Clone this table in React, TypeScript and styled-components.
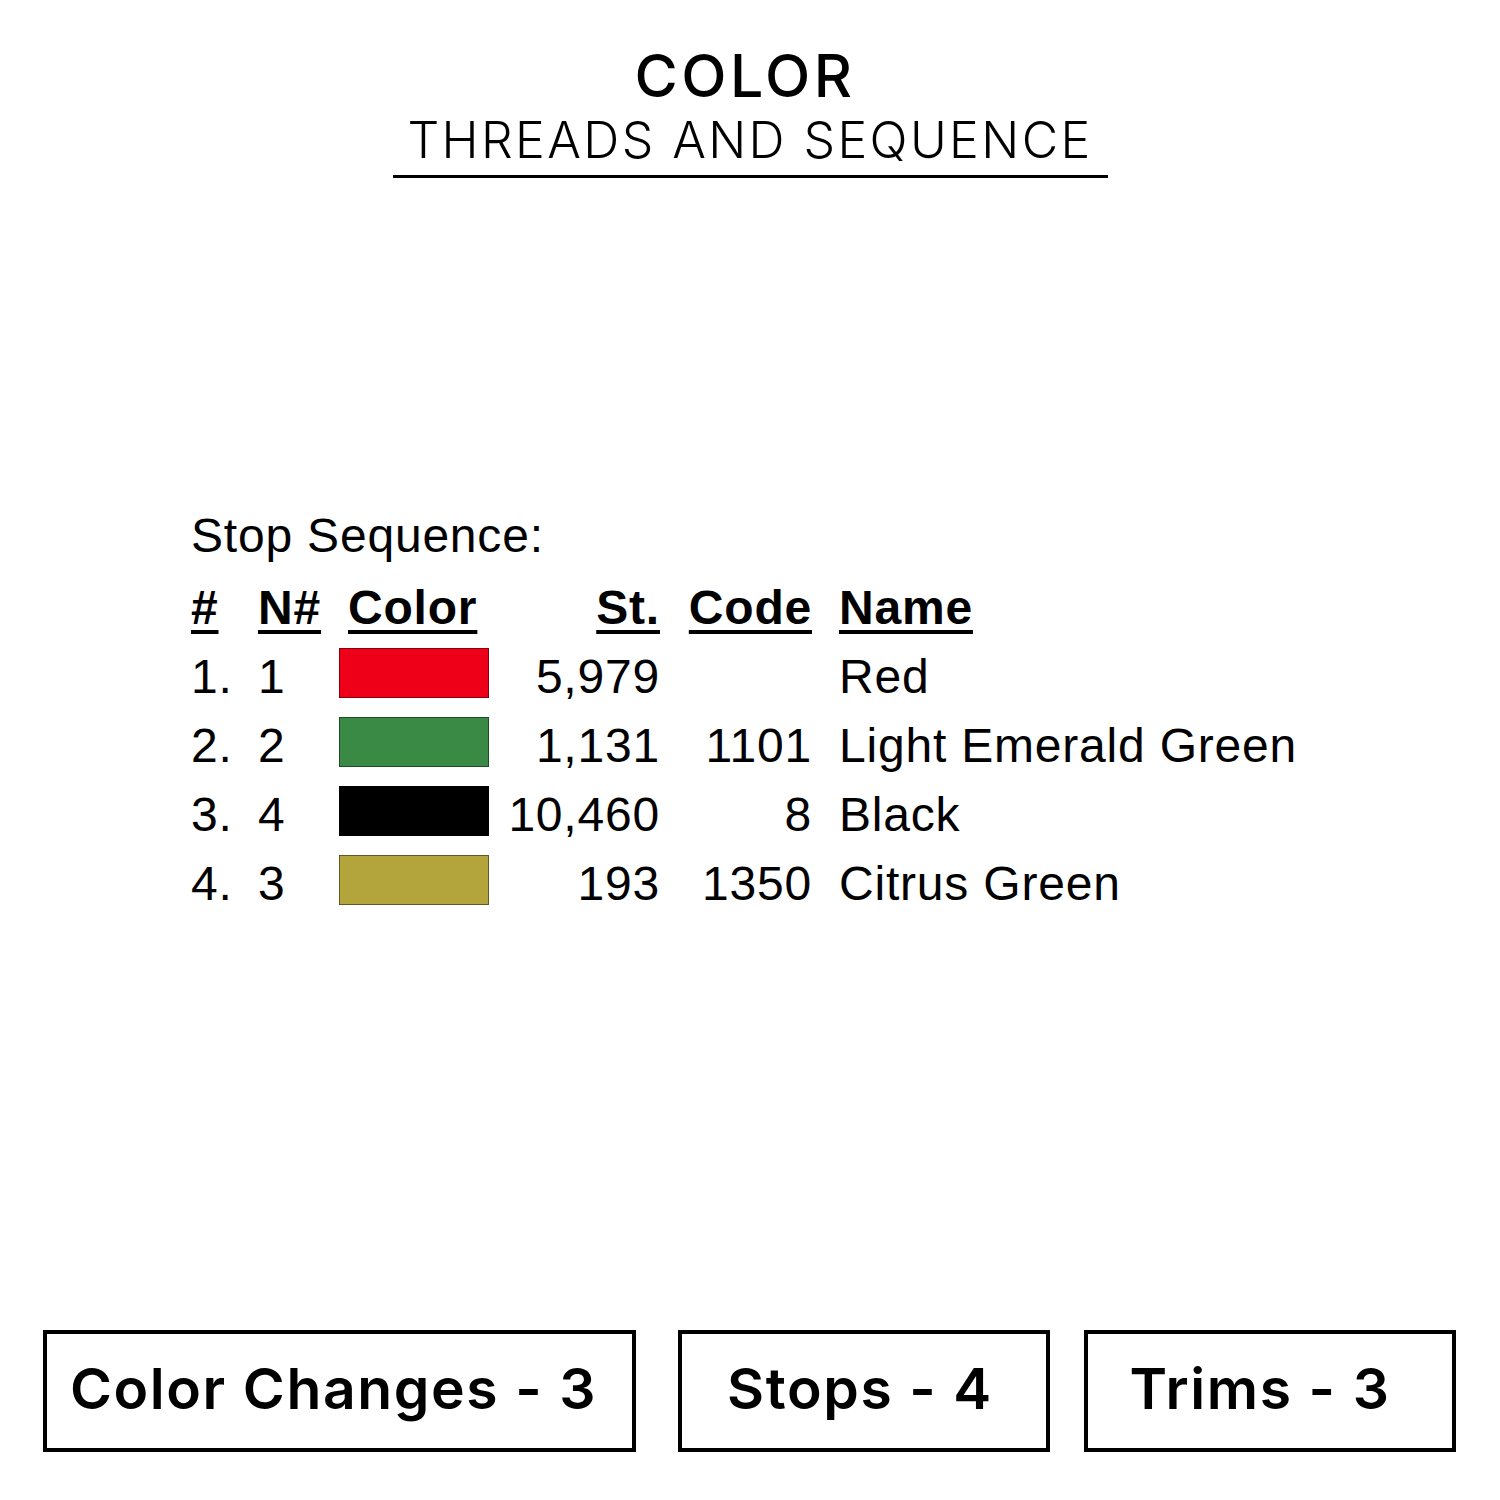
import React from "react";
import styled, { createGlobalStyle } from "styled-components";

const Global = createGlobalStyle`
  html, body { margin: 0; padding: 0; background: #ffffff; }
  body { width: 1500px; height: 1500px; overflow: hidden; }
`;

const Page = styled.div`
  width: 1500px;
  height: 1500px;
  display: flex;
  flex-direction: column;
  background: #fff;
  color: #000;
  box-sizing: border-box;
`;

const Header = styled.header`
  display: flex;
  flex-direction: column;
  align-items: center;
  padding-top: 44px;
`;

const Title = styled.h1`
  margin: 0;
  font-family: Inter, "Noto Sans", sans-serif;
  font-weight: 500;
  font-size: 59px;
  line-height: 64px;
  letter-spacing: 3.5px;
  padding-right: 10px;
`;

const Subtitle = styled.h2`
  margin: 0;
  width: 715px;
  text-align: center;
  font-family: Inter, "Noto Sans", sans-serif;
  font-weight: 300;
  font-size: 50px;
  line-height: 58px;
  letter-spacing: 2.4px;
  padding-top: 3px;
  padding-bottom: 6px;
  border-bottom: 3.5px solid #000;
`;

const Sequence = styled.section`
  margin-top: 323px;
  padding-left: 191px;
  font-family: "Liberation Sans", Arial, sans-serif;
  font-size: 48px;
  letter-spacing: 0.8px;
`;

const Caption = styled.div`
  line-height: 69px;
  margin-bottom: 3px;
`;

const Table = styled.div`
  display: grid;
  grid-template-columns: 67px 81px 150px 171px 152px auto;
  grid-auto-rows: 69px;
  line-height: 69px;
`;

const Head = styled.div<{ $align?: "left" | "right"; $pad?: number }>`
  font-weight: 700;
  text-decoration: underline;
  text-decoration-thickness: 4px;
  text-underline-offset: 6px;
  text-align: ${(p) => p.$align ?? "left"};
  padding-left: ${(p) => p.$pad ?? 0}px;
  white-space: nowrap;
`;

const Cell = styled.div<{ $align?: "left" | "right"; $pad?: number }>`
  text-align: ${(p) => p.$align ?? "left"};
  padding-left: ${(p) => p.$pad ?? 0}px;
  white-space: nowrap;
`;

const Swatch = styled.div<{ $color: string }>`
  margin-top: 6px;
  width: 150px;
  height: 50px;
  box-sizing: border-box;
  background: ${(p) => p.$color};
  border: 1.5px solid rgba(0, 0, 0, 0.45);
`;

const Spacer = styled.div`
  flex: 1;
`;

const Stats = styled.footer`
  display: flex;
  padding: 0 0 48px 43px;
`;

const StatBox = styled.div<{ $w: number; $ml: number; $shift: number }>`
  width: ${(p) => p.$w}px;
  margin-left: ${(p) => p.$ml}px;
  height: 122px;
  box-sizing: border-box;
  border: 4px solid #000;
  display: flex;
  align-items: center;
  justify-content: center;
  font-family: Inter, "Noto Sans", sans-serif;
  font-weight: 600;
  font-size: 57px;
  letter-spacing: 1.6px;
  padding-bottom: 6px;
  padding-right: ${(p) => p.$shift}px;
`;

const rows = [
  { n: "1.", nn: "1", color: "#ee0019", st: "5,979", code: "", name: "Red" },
  { n: "2.", nn: "2", color: "#3a8a45", st: "1,131", code: "1101", name: "Light Emerald Green" },
  { n: "3.", nn: "4", color: "#000000", st: "10,460", code: "8", name: "Black" },
  { n: "4.", nn: "3", color: "#b3a43c", st: "193", code: "1350", name: "Citrus Green" },
];

const stats = [
  { label: "Color Changes - 3", w: 593, ml: 0, shift: 12 },
  { label: "Stops - 4", w: 372, ml: 42, shift: 8 },
  { label: "Trims - 3", w: 372, ml: 34, shift: 20 },
];

export default function App() {
  return (
    <Page>
      <Global />
      <Header>
        <Title>COLOR</Title>
        <Subtitle>THREADS AND SEQUENCE</Subtitle>
      </Header>
      <Sequence>
        <Caption>Stop Sequence:</Caption>
        <Table>
          <Head>#</Head>
          <Head>N#</Head>
          <Head $pad={9}>Color</Head>
          <Head $align="right">St.</Head>
          <Head $align="right">Code</Head>
          <Head $pad={27}>Name</Head>
          {rows.map((r) => (
            <React.Fragment key={r.n}>
              <Cell>{r.n}</Cell>
              <Cell>{r.nn}</Cell>
              <Swatch $color={r.color} />
              <Cell $align="right">{r.st}</Cell>
              <Cell $align="right">{r.code}</Cell>
              <Cell $pad={27}>{r.name}</Cell>
            </React.Fragment>
          ))}
        </Table>
      </Sequence>
      <Spacer />
      <Stats>
        {stats.map((s) => (
          <StatBox key={s.label} $w={s.w} $ml={s.ml} $shift={s.shift}>
            {s.label}
          </StatBox>
        ))}
      </Stats>
    </Page>
  );
}
